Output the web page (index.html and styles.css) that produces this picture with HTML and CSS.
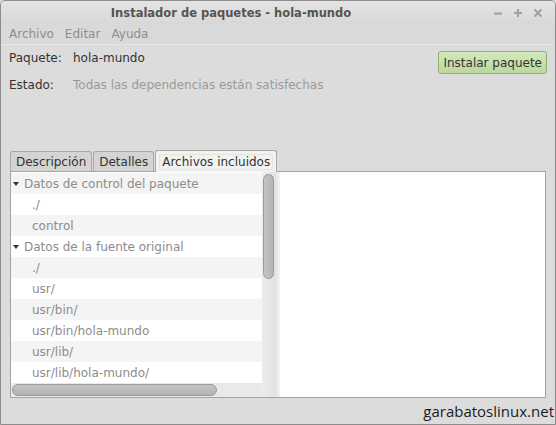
FILE: index.html
```html
<!DOCTYPE html>
<html lang="es">
<head>
<meta charset="utf-8">
<title>Instalador de paquetes - hola-mundo</title>
<link rel="stylesheet" href="styles.css">
</head>
<body>
<div class="window">
  <div class="titlebar">
    <div class="title">Instalador de paquetes - hola-mundo</div>
    <div class="controls">
      <svg width="10" height="10" viewBox="0 0 10 10"><path d="M1 5.5h8" stroke="#a0a0a0" stroke-width="2"/></svg>
      <svg width="10" height="10" viewBox="0 0 10 10"><path d="M1 5h8M5 1v8" stroke="#a0a0a0" stroke-width="2"/></svg>
      <svg width="10" height="10" viewBox="0 0 10 10"><path d="M1.5 1.5l7 7M8.5 1.5l-7 7" stroke="#a0a0a0" stroke-width="2"/></svg>
    </div>
  </div>
  <div class="menubar">
    <span class="menu">Archivo</span>
    <span class="menu">Editar</span>
    <span class="menu">Ayuda</span>
  </div>
  <div class="body">
    <div class="info">
      <div class="info-rows">
        <div class="info-row"><span class="label">Paquete:</span><span class="value">hola-mundo</span></div>
        <div class="info-row"><span class="label">Estado:</span><span class="value muted">Todas las dependencias están satisfechas</span></div>
      </div>
      <button class="install">Instalar paquete</button>
    </div>
    <div class="tabs">
      <div class="tab">Descripción</div>
      <div class="tab">Detalles</div>
      <div class="tab active"><span class="focus">Archivos incluidos</span></div>
    </div>
    <div class="pane">
      <div class="list">
        <div class="row head"><span class="arrow"></span>Datos de control del paquete</div>
        <div class="row child">./</div>
        <div class="row child">control</div>
        <div class="row head"><span class="arrow"></span>Datos de la fuente original</div>
        <div class="row child">./</div>
        <div class="row child">usr/</div>
        <div class="row child">usr/bin/</div>
        <div class="row child">usr/bin/hola-mundo</div>
        <div class="row child">usr/lib/</div>
        <div class="row child">usr/lib/hola-mundo/</div>
      </div>
      <div class="vscroll"><div class="vthumb"></div></div>
      <div class="sep"></div>
      <div class="right"></div>
      <div class="hscroll"><div class="hthumb"></div></div>
    </div>
    <div class="footer">garabatoslinux.net</div>
  </div>
</div>
</body>
</html>
```
FILE: styles.css
```css
* { box-sizing: border-box; }
html, body { margin: 0; padding: 0; }
body {
  width: 556px;
  height: 425px;
  overflow: hidden;
  font-family: "DejaVu Sans", sans-serif;
  font-size: 12px;
  color: #3a3a3a;
  background: #dcdcdc;
}
.window {
  width: 556px;
  height: 425px;
  border: 1px solid #8c8c8c;
  border-radius: 5px 5px 0 0;
  background: #dcdcdc;
  display: flex;
  flex-direction: column;
  overflow: hidden;
}
.titlebar {
  height: 23px;
  position: relative;
  background: linear-gradient(#e4e4e4, #d8d8d8);
  display: flex;
  align-items: center;
  justify-content: center;
  padding-right: 94px;
}
.title {
  font-weight: bold;
  font-size: 11.5px;
  color: #555;
}
.controls {
  position: absolute;
  right: 12px;
  top: 7px;
  display: flex;
  gap: 10px;
}
.controls svg { display: block; }
.menubar {
  height: 20px;
  display: flex;
  align-items: center;
  padding-left: 8px;
  gap: 11px;
  background: #d9d9d9;
  color: #8e8e8e;
}
.body {
  flex: 1;
  display: flex;
  flex-direction: column;
  background: #dcdcdc;
  border-top: 1px solid #e6e6e6;
}
.info {
  display: flex;
  justify-content: space-between;
  padding: 0 8px 0 8px;
  height: 105px;
}
.info-rows { display: flex; flex-direction: column; margin-top: -1px; }
.info-row {
  height: 27px;
  display: flex;
  align-items: center;
}
.label { width: 64px; color: #333; }
.value { color: #333; }
.value.muted { color: #9a9a9a; }
.install {
  margin-top: 6px;
  height: 23px;
  padding: 0 4px;
  font-family: "DejaVu Sans", sans-serif;
  font-size: 12px;
  color: #333;
  background: linear-gradient(#d3e8bb, #bcd79e);
  border: 1px solid #8fae72;
  border-radius: 3px;
}
.tabs {
  display: flex;
  padding-left: 9px;
  gap: 1px;
  height: 21px;
  align-items: flex-end;
}
.tab {
  height: 20px;
  padding: 0 5px;
  display: flex;
  align-items: center;
  background: #d4d4d4;
  border: 1px solid #a8a8a8;
  border-bottom: none;
  border-radius: 3px 3px 0 0;
  color: #333;
}
.tab.active {
  height: 22px;
  background: #f2f2f2;
  padding: 0 3px 0 3px;
  margin-bottom: -1px;
  position: relative;
  z-index: 1;
}
.focus {
  padding: 1px 3px;
  border-radius: 3px;
  box-shadow: inset 0 0 0 1px #dfe8d2;
}
.pane {
  margin: 0 9px 0 9px;
  height: 227px;
  border: 1px solid #a4a4a4;
  background: #ffffff;
  display: grid;
  grid-template-columns: 251px 13px 5px 1fr;
  grid-template-rows: 211px 14px;
}
.list {
  grid-column: 1;
  grid-row: 1;
  padding-top: 1px;
  background: #fff;
  color: #8c8c8c;
  overflow: hidden;
}
.row {
  height: 21px;
  display: flex;
  align-items: center;
  white-space: nowrap;
}
.row:nth-child(odd) { background: #f4f4f4; }
.row.head { padding-left: 2px; }
.row.child { padding-left: 21px; }
.arrow {
  width: 0;
  height: 0;
  border-left: 3px solid transparent;
  border-right: 3px solid transparent;
  border-top: 4px solid #333;
  margin-right: 5px;
}
.vscroll {
  grid-column: 2;
  grid-row: 1 / 3;
  background: linear-gradient(90deg, #ececec, #e2e2e2);
  padding: 2px 1px 0 1px;
}
.vthumb {
  height: 105px;
  border: 1px solid #9a9a9a;
  border-radius: 6px;
  background: linear-gradient(90deg, #c4c4c4, #b4b4b4);
}
.sep {
  grid-column: 3;
  grid-row: 1 / 3;
  background: linear-gradient(90deg, #e0e0e0, #f4f4f4);
}
.right {
  grid-column: 4;
  grid-row: 1 / 3;
  background: #fff;
}
.hscroll {
  grid-column: 1;
  grid-row: 2;
  background: #e9e9e9;
  padding: 1px 0 0 1px;
}
.hthumb {
  width: 205px;
  height: 12px;
  border: 1px solid #9a9a9a;
  border-radius: 6px;
  background: linear-gradient(#c4c4c4, #b2b2b2);
}
.footer {
  flex: 1;
  display: flex;
  align-items: center;
  justify-content: flex-end;
  padding-right: 1px;
  font-family: "Open Sans", sans-serif;
  font-size: 15px;
  color: #1c1c1c;
}
```
